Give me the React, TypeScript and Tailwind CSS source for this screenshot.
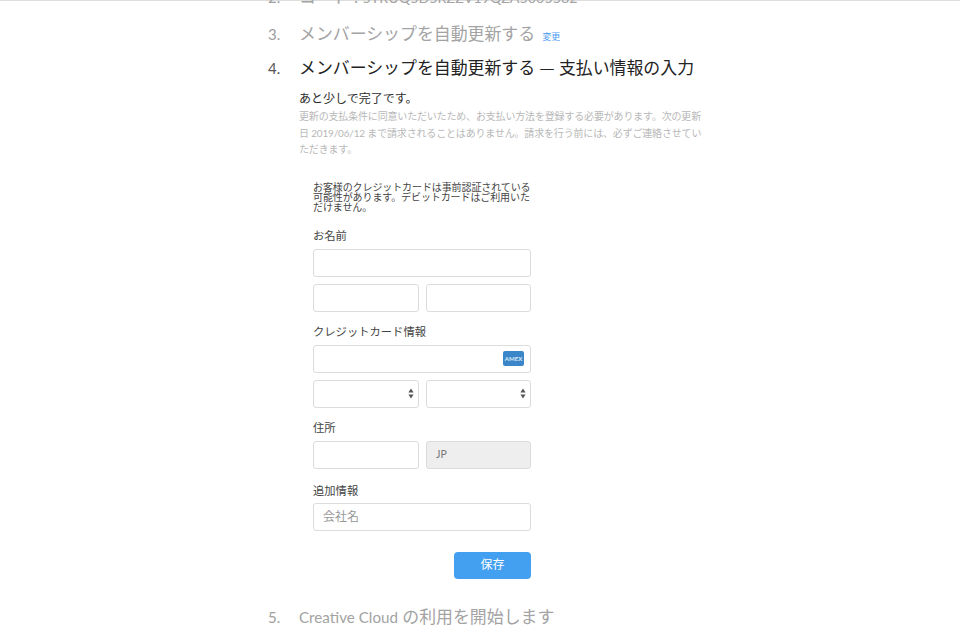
const jp = "font-['Lato','Noto_Sans_CJK_JP','Noto_Sans',sans-serif]";

function Field({ className = "bg-white", children }: { className?: string; children?: React.ReactNode }) {
  return (
    <div className={`h-7 rounded-[3px] border border-[#dcdcdc] flex items-center ${className}`}>
      {children}
    </div>
  );
}

function SelectArrows() {
  return (
    <svg width="6" height="11" viewBox="0 0 6 11" className="ml-auto mr-[4px]">
      <path d="M3 0.5 L5.6 4.4 L0.4 4.4 Z" fill="#555" />
      <path d="M3 10.5 L5.6 6.6 L0.4 6.6 Z" fill="#555" />
    </svg>
  );
}

function Step({ num, active, children }: { num: string; active?: boolean; children: React.ReactNode }) {
  return (
    <div className={`flex items-baseline ${active ? "text-[#222]" : "text-[#a3a3a3]"}`}>
      <span className={`w-[31px] text-[15px] ${active ? "text-[#555]" : "text-[#a0a0a0]"}`}>{num}</span>
      <div className="text-[16.9px] leading-[24px] whitespace-nowrap">{children}</div>
    </div>
  );
}

export default function App() {
  return (
    <div className={`h-[640px] w-[960px] overflow-hidden bg-white ${jp}`}>
      <div className="h-px bg-[#dddddd]" />
      <div className="pl-[268px] w-[710px] -mt-[16px]">
        <Step num="2.">
          コード : <span className="text-[14.3px]">5TRUQ5D5RZZV19QZA5005582</span>
        </Step>

        <div className="mt-[12px]">
          <Step num="3.">
            メンバーシップを自動更新する
            <span className="ml-[7px] text-[9px] text-[#4a9cf0]">変更</span>
          </Step>
        </div>

        <div className="mt-[6px]">
          <Step num="4." active>
            メンバーシップを自動更新する <span className="font-['Noto_Sans_CJK_JP',sans-serif]">—</span> 支払い情報の入力
          </Step>
        </div>

        <div className="pl-[31px] w-[437px]">
          <p className="mt-[10px] text-[12px] leading-[18px] text-[#2c2c2c]">あと少しで完了です。</p>
          <p className="w-[405px] text-[10px] leading-[16.5px] tracking-[-0.17px] text-[#b8b8b8]">
            更新の支払条件に同意いただいたため、お支払い方法を登録する必要があります。次の更新日 2019/06/12 まで請求されることはありません。請求を行う前には、必ずご連絡させていただきます。
          </p>

          <div className="mt-[24px] ml-[14px] w-[218px]">
            <p className="text-[10px] leading-[10px] text-[#444] tracking-[-0.1px]">
              お客様のクレジットカードは事前認証されている可能性があります。デビットカードはご利用いただけません。
            </p>

            <p className="mt-[16px] text-[11.3px] leading-[16px] text-[#444]">お名前</p>
            <Field className="mt-[5px] bg-white" />
            <div className="mt-[7px] grid grid-cols-[106px_105px] gap-x-[7px]">
              <Field />
              <Field />
            </div>

            <p className="mt-[12px] text-[11.3px] leading-[16px] text-[#444]">クレジットカード情報</p>
            <Field className="mt-[5px] bg-white">
              <div className="ml-auto mr-[6px] h-[15px] w-[21px] rounded-[2px] bg-[#3b86c8] flex items-center justify-center text-[6px] font-bold text-[#dcebf7]">
                AMEX
              </div>
            </Field>
            <div className="mt-[7px] grid grid-cols-[106px_105px] gap-x-[7px]">
              <Field><SelectArrows /></Field>
              <Field><SelectArrows /></Field>
            </div>

            <p className="mt-[12px] text-[11.3px] leading-[16px] text-[#444]">住所</p>
            <div className="mt-[5px] grid grid-cols-[106px_105px] gap-x-[7px]">
              <Field />
              <Field className="bg-[#eeeeee] pl-[9px] text-[10.5px] text-[#777]">JP</Field>
            </div>

            <p className="mt-[14px] text-[11.3px] leading-[16px] text-[#444]">追加情報</p>
            <Field className="mt-[4px] bg-white pl-[9px] text-[12px] text-[#999]">会社名</Field>

            <div className="mt-[21px] flex justify-end">
              <button className="h-[27px] w-[77px] rounded-[4px] bg-[#439ff0] text-[12px] text-white">保存</button>
            </div>
          </div>
        </div>

        <div className="mt-[26px]">
          <Step num="5.">
            <span className="text-[15.2px]">Creative Cloud</span> の利用を開始します
          </Step>
        </div>
      </div>
    </div>
  );
}
